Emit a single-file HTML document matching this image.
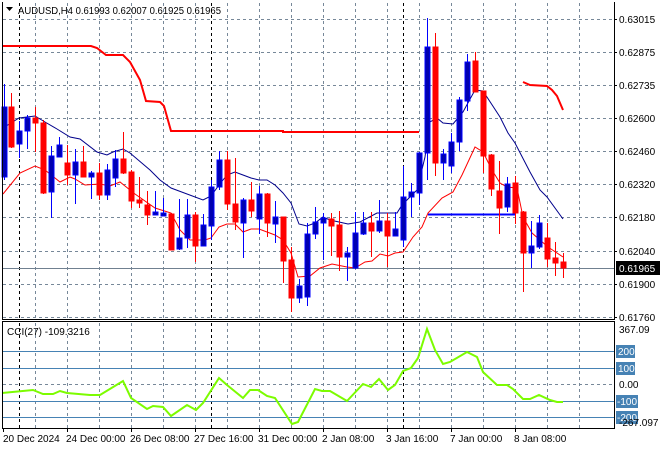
<!DOCTYPE html>
<html><head><meta charset="utf-8"><style>
html,body{margin:0;padding:0;background:#fff;width:660px;height:450px;overflow:hidden}
svg{display:block;font-family:"Liberation Sans",sans-serif;font-size:10px}
</style></head><body>
<svg width="660" height="450" viewBox="0 0 660 450" xmlns="http://www.w3.org/2000/svg">
<rect width="660" height="450" fill="#fff"/>
<g stroke="#778899" stroke-dasharray="3,3" stroke-width="1">
<path d="M3 19.5H614M3 52.5H614M3 85.5H614M3 118.5H614M3 151.5H614M3 184.5H614M3 217.5H614M3 251.5H614M3 284.5H614M3 317.5H614"/>
<path d="M35.5 3V318M67.5 3V318M99.5 3V318M131.5 3V318M163.5 3V318M195.5 3V318M227.5 3V318M259.5 3V318M291.5 3V318M323.5 3V318M355.5 3V318M387.5 3V318M419.5 3V318M451.5 3V318M483.5 3V318M515.5 3V318M547.5 3V318M579.5 3V318"/>
<path d="M35.5 323V428M67.5 323V428M99.5 323V428M131.5 323V428M163.5 323V428M195.5 323V428M227.5 323V428M259.5 323V428M291.5 323V428M323.5 323V428M355.5 323V428M387.5 323V428M419.5 323V428M451.5 323V428M483.5 323V428M515.5 323V428M547.5 323V428M579.5 323V428"/>
<path d="M3 384.5H614"/>
</g>
<g stroke="#000" stroke-dasharray="3,3"><path d="M19.5 3V318M211.5 3V318M403.5 3V318M19.5 323V428M211.5 323V428M403.5 323V428"/></g>
<path d="M3 268.5H614" stroke="#708090"/>
<g stroke="#4682b4"><path d="M3 351.5H614M3 368.5H614M3 401.5H614M3 417.5H614"/></g>
<polyline fill="none" stroke="#f00" stroke-width="2" points="3,46 91,46 97,48 106,55 123,55 130,62 140,80 146,101 160,102 164,106 171,131 283,131 283,132 419,132"/>
<polyline fill="none" stroke="#f00" stroke-width="2" points="523,82 530,85 547,86 552,90 557,96 563,110"/>
<line x1="428" y1="214.5" x2="516" y2="214.5" stroke="#00f" stroke-width="2"/>
<polyline fill="none" stroke="#00008b" stroke-width="1" points="3,128 19,118 35,116 45,122 57,129 70,137 80,139 97,152 107,155 113,152 123,149 130,153 150,170 160,180 171,188 203,200 211,196 219,185 227,175 235,172 243,175 251,178 259,180 267,180 275,185 283,193 291,203 299,224 307,226 315,223 323,217 330,220 348,224 360,222 377,213 397,213 402,205 417,190 425,157 430,122 437,118 443,123 453,124 463,112 475,90 483,91 500,117 508,133 515,143 530,172 540,190 547,197 563,219"/>
<polyline fill="none" stroke="#f00" stroke-width="1" points="3,194 20,173 35,166 45,170 55,178 60,182 70,177 75,179 85,185 100,184 110,186 120,182 125,186 135,194 155,208 171,213 180,230 190,240 205,240 211,238 219,227 227,224 235,224 243,232 251,229 259,229 267,232 275,235 283,240 291,253 298,277 310,276 320,268 332,264 347,267 355,268 365,262 372,261 380,254 388,256 395,253 403,252 413,237 422,227 428,213 442,198 453,192 462,175 475,147 483,152 492,170 500,183 507,187 517,188 523,217 532,233 540,240 548,247 557,253 563,257"/>
<g id="c">
<g stroke="#00f" fill="#0000b0">
<line x1="4.5" y1="84" x2="4.5" y2="180"/><rect x="2" y="107" width="5" height="70"/>
<line x1="19.5" y1="121" x2="19.5" y2="158"/><rect x="17" y="131" width="5" height="13"/>
<line x1="27.5" y1="115" x2="27.5" y2="149"/><rect x="25" y="118" width="5" height="13"/>
<line x1="51.5" y1="146" x2="51.5" y2="218"/><rect x="49" y="156" width="5" height="36"/>
<line x1="59.5" y1="137" x2="59.5" y2="157"/><rect x="57" y="145" width="5" height="12"/>
<line x1="75.5" y1="149" x2="75.5" y2="204"/><rect x="73" y="162" width="5" height="13"/>
<line x1="91.5" y1="171" x2="91.5" y2="199"/><rect x="89" y="173" width="5" height="4"/>
<line x1="107.5" y1="164" x2="107.5" y2="200"/><rect x="105" y="170" width="5" height="25"/>
<line x1="115.5" y1="150" x2="115.5" y2="187"/><rect x="113" y="159" width="5" height="19"/>
<line x1="155.5" y1="191" x2="155.5" y2="215"/><rect x="153" y="212" width="5" height="3"/>
<line x1="163.5" y1="198" x2="163.5" y2="216"/><rect x="161" y="213" width="5" height="3"/>
<line x1="179.5" y1="199" x2="179.5" y2="250"/><rect x="177" y="238" width="5" height="11"/>
<line x1="187.5" y1="199" x2="187.5" y2="248"/><rect x="185" y="215" width="5" height="23"/>
<line x1="203.5" y1="214" x2="203.5" y2="246"/><rect x="201" y="225" width="5" height="21"/>
<line x1="211.5" y1="180" x2="211.5" y2="240"/><rect x="209" y="187" width="5" height="39"/>
<line x1="219.5" y1="151" x2="219.5" y2="190"/><rect x="217" y="160" width="5" height="27"/>
<line x1="243.5" y1="198" x2="243.5" y2="258"/><rect x="241" y="200" width="5" height="23"/>
<line x1="259.5" y1="186" x2="259.5" y2="234"/><rect x="257" y="194" width="5" height="25"/>
<line x1="275.5" y1="201" x2="275.5" y2="243"/><rect x="273" y="217" width="5" height="7"/>
<line x1="299.5" y1="279" x2="299.5" y2="303"/><rect x="297" y="286" width="5" height="12"/>
<line x1="307.5" y1="223" x2="307.5" y2="306"/><rect x="305" y="234" width="5" height="63"/>
<line x1="315.5" y1="207" x2="315.5" y2="239"/><rect x="313" y="222" width="5" height="12"/>
<line x1="323.5" y1="213" x2="323.5" y2="260"/><rect x="321" y="218" width="5" height="5"/>
<line x1="347.5" y1="247" x2="347.5" y2="281"/><rect x="345" y="253" width="5" height="4"/>
<line x1="355.5" y1="212" x2="355.5" y2="269"/><rect x="353" y="233" width="5" height="35"/>
<line x1="363.5" y1="212" x2="363.5" y2="235"/><rect x="361" y="223" width="5" height="11"/>
<line x1="379.5" y1="200" x2="379.5" y2="233"/><rect x="377" y="221" width="5" height="10"/>
<line x1="395.5" y1="212" x2="395.5" y2="236"/><rect x="393" y="229" width="5" height="7"/>
<line x1="403.5" y1="166" x2="403.5" y2="247"/><rect x="401" y="197" width="5" height="43"/>
<line x1="411.5" y1="183" x2="411.5" y2="217"/><rect x="409" y="192" width="5" height="5"/>
<line x1="419.5" y1="152" x2="419.5" y2="205"/><rect x="417" y="153" width="5" height="40"/>
<line x1="427.5" y1="18" x2="427.5" y2="180"/><rect x="425" y="47" width="5" height="106"/>
<line x1="443.5" y1="149" x2="443.5" y2="180"/><rect x="441" y="154" width="5" height="9"/>
<line x1="451.5" y1="133" x2="451.5" y2="173"/><rect x="449" y="142" width="5" height="24"/>
<line x1="459.5" y1="97" x2="459.5" y2="151"/><rect x="457" y="100" width="5" height="42"/>
<line x1="467.5" y1="54" x2="467.5" y2="111"/><rect x="465" y="62" width="5" height="39"/>
<line x1="507.5" y1="177" x2="507.5" y2="212"/><rect x="505" y="184" width="5" height="23"/>
<line x1="531.5" y1="221" x2="531.5" y2="268"/><rect x="529" y="246" width="5" height="7"/>
<line x1="539.5" y1="215" x2="539.5" y2="249"/><rect x="537" y="223" width="5" height="24"/>
</g>
<g stroke="#f00" fill="#f00">
<line x1="11.5" y1="93" x2="11.5" y2="148"/><rect x="9" y="107" width="5" height="40"/>
<line x1="35.5" y1="107" x2="35.5" y2="152"/><rect x="33" y="118" width="5" height="5"/>
<line x1="43.5" y1="120" x2="43.5" y2="194"/><rect x="41" y="123" width="5" height="70"/>
<line x1="67.5" y1="145" x2="67.5" y2="185"/><rect x="65" y="163" width="5" height="12"/>
<line x1="83.5" y1="146" x2="83.5" y2="177"/><rect x="81" y="162" width="5" height="15"/>
<line x1="99.5" y1="163" x2="99.5" y2="200"/><rect x="97" y="173" width="5" height="22"/>
<line x1="123.5" y1="132" x2="123.5" y2="174"/><rect x="121" y="159" width="5" height="14"/>
<line x1="131.5" y1="170" x2="131.5" y2="208"/><rect x="129" y="172" width="5" height="29"/>
<line x1="139.5" y1="177" x2="139.5" y2="208"/><rect x="137" y="200" width="5" height="3"/>
<line x1="147.5" y1="191" x2="147.5" y2="225"/><rect x="145" y="205" width="5" height="10"/>
<line x1="171.5" y1="213" x2="171.5" y2="250"/><rect x="169" y="214" width="5" height="36"/>
<line x1="195.5" y1="212" x2="195.5" y2="262"/><rect x="193" y="215" width="5" height="31"/>
<line x1="227.5" y1="151" x2="227.5" y2="210"/><rect x="225" y="160" width="5" height="44"/>
<line x1="235.5" y1="158" x2="235.5" y2="230"/><rect x="233" y="204" width="5" height="18"/>
<line x1="251.5" y1="182" x2="251.5" y2="217"/><rect x="249" y="200" width="5" height="11"/>
<line x1="267.5" y1="193" x2="267.5" y2="237"/><rect x="265" y="194" width="5" height="29"/>
<line x1="283.5" y1="217" x2="283.5" y2="283"/><rect x="281" y="217" width="5" height="44"/>
<line x1="291.5" y1="247" x2="291.5" y2="312"/><rect x="289" y="260" width="5" height="38"/>
<line x1="331.5" y1="213" x2="331.5" y2="256"/><rect x="329" y="219" width="5" height="7"/>
<line x1="339.5" y1="211" x2="339.5" y2="271"/><rect x="337" y="225" width="5" height="32"/>
<line x1="371.5" y1="212" x2="371.5" y2="257"/><rect x="369" y="223" width="5" height="8"/>
<line x1="387.5" y1="213" x2="387.5" y2="267"/><rect x="385" y="221" width="5" height="15"/>
<line x1="435.5" y1="33" x2="435.5" y2="176"/><rect x="433" y="47" width="5" height="116"/>
<line x1="475.5" y1="52" x2="475.5" y2="92"/><rect x="473" y="61" width="5" height="31"/>
<line x1="483.5" y1="91" x2="483.5" y2="173"/><rect x="481" y="91" width="5" height="65"/>
<line x1="491.5" y1="154" x2="491.5" y2="196"/><rect x="489" y="155" width="5" height="34"/>
<line x1="499.5" y1="161" x2="499.5" y2="234"/><rect x="497" y="191" width="5" height="17"/>
<line x1="515.5" y1="176" x2="515.5" y2="224"/><rect x="513" y="183" width="5" height="30"/>
<line x1="523.5" y1="211" x2="523.5" y2="292"/><rect x="521" y="212" width="5" height="41"/>
<line x1="547.5" y1="223" x2="547.5" y2="267"/><rect x="545" y="238" width="5" height="21"/>
<line x1="555.5" y1="242" x2="555.5" y2="276"/><rect x="553" y="258" width="5" height="5"/>
<line x1="563.5" y1="253" x2="563.5" y2="278"/><rect x="561" y="262" width="5" height="6"/>
</g>
</g>
<polyline fill="none" stroke="#7cfc00" stroke-width="2" points="2,393 33,390 43,394 53,394 60,391 67,393 90,395 100,395 123,381 131,398 147,409 153,406 163,407 171,416 187,405 196,410 203,403 219,378 227,385 243,398 250,390 258,390 267,396 275,398 292,424 298,422 315,389 322,391 330,391 347,401 363,384 371,387 379,379 388,390 395,385 403,371 411,368 418,358 427,329 435,350 443,364 450,362 467,352 477,357 483,372 497,385 507,385 513,389 523,399 530,399 539,395 550,400 557,402 563,402"/>
<g fill="none" stroke="#000" stroke-width="1">
<path d="M2.5 2V319.5H614.5V2"/>
<path d="M2.5 321.5H614.5V428.5H2.5Z"/>
</g>
<path d="M6 7h7l-3.5 4z" fill="#000"/>
<text x="18" y="14" fill="#000" textLength="203" lengthAdjust="spacingAndGlyphs">AUDUSD,H4  0.61993 0.62007 0.61925 0.61965</text>
<text x="7" y="335" fill="#000">CCI(27) -109.3216</text>
<g fill="#000">
<g stroke="#000"><path d="M614 19.5h3M614 52.5h3M614 85.5h3M614 118.5h3M614 151.5h3M614 184.5h3M614 217.5h3M614 251.5h3M614 284.5h3M614 317.5h3"/></g>
<text x="619" y="23">0.63015</text>
<text x="619" y="56">0.62875</text>
<text x="619" y="89">0.62735</text>
<text x="619" y="122">0.62600</text>
<text x="619" y="155">0.62460</text>
<text x="619" y="188">0.62320</text>
<text x="619" y="221">0.62180</text>
<text x="619" y="255">0.62040</text>
<text x="619" y="288">0.61900</text>
<text x="619" y="321">0.61760</text>
</g>
<rect x="616" y="261" width="44" height="14" fill="#000"/>
<text x="619" y="272" fill="#fff">0.61965</text>
<g fill="#000"><text x="619" y="333">367.09</text><text x="619" y="388">0.00</text></g>
<rect x="616" y="345" width="19" height="13" fill="#4682b4"/><text x="618" y="355" fill="#fff">200</text>
<rect x="616" y="362" width="19" height="13" fill="#4682b4"/><text x="618" y="372" fill="#fff">100</text>
<rect x="616" y="395" width="22" height="13" fill="#4682b4"/><text x="617" y="405" fill="#fff">-100</text>
<rect x="616" y="411" width="22" height="13" fill="#4682b4"/><text x="617" y="421" fill="#fff">-200</text>
<text x="619" y="426" fill="#000">-267.097</text>
<g stroke="#000"><path d="M3.5 429v3M67.5 429v3M131.5 429v3M195.5 429v3M259.5 429v3M323.5 429v3M387.5 429v3M451.5 429v3M515.5 429v3"/></g>
<g fill="#000">
<text x="3" y="442">20 Dec 2024</text>
<text x="66" y="442">24 Dec 00:00</text>
<text x="130" y="442">26 Dec 08:00</text>
<text x="194" y="442">27 Dec 16:00</text>
<text x="258" y="442">31 Dec 00:00</text>
<text x="322" y="442">2 Jan 08:00</text>
<text x="386" y="442">3 Jan 16:00</text>
<text x="450" y="442">7 Jan 00:00</text>
<text x="514" y="442">8 Jan 08:00</text>
</g>
</svg>
</body></html>
